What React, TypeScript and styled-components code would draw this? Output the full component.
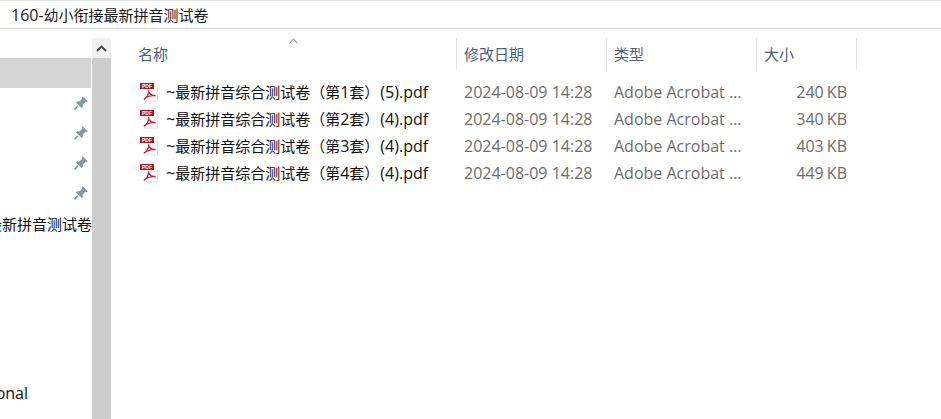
import * as React from 'react';
import styled, { createGlobalStyle } from 'styled-components';

const GlobalStyle = createGlobalStyle`
  html, body {
    margin: 0;
    padding: 0;
    background: #fff;
    overflow: hidden;
  }
  body {
    font-family: "Noto Sans CJK SC", "Open Sans", sans-serif;
  }
`;

// latin bits run a little bigger than the CJK around them
const Latin = styled.span`
  font-family: "Open Sans", sans-serif;
  font-size: 16px;
`;

const Window = styled.div`
  width: 941px;
  height: 419px;
  display: flex;
  flex-direction: column;
  overflow: hidden;
`;

const AddressBar = styled.div`
  height: 27px;
  flex: none;
  padding-left: 11px;
  display: flex;
  align-items: center;
  border-top: 1px solid #e3e3e3;
  border-bottom: 1px solid #d9d9d9;
  font-size: 15px;
  color: #1a1a1a;
  white-space: pre;
`;

const Body = styled.div`
  flex: 1;
  display: flex;
  min-height: 0;
`;

const Sidebar = styled.nav`
  width: 92px;
  flex: none;
  padding-top: 29px;
`;

const NavRow = styled.div<{ $selected?: boolean; $gap?: number; $inset?: number }>`
  height: 30px;
  margin-top: ${(p) => p.$gap || 0}px;
  margin-right: ${(p) => (p.$selected ? 1 : 0)}px;
  padding-right: ${(p) => p.$inset || 0}px;
  display: flex;
  align-items: center;
  justify-content: flex-end;
  overflow: hidden;
  white-space: nowrap;
  font-size: 15px;
  color: #111;
  background: ${(p) => (p.$selected ? '#d4d4d4' : 'transparent')};
`;

const PinWrap = styled.span`
  display: flex;
  margin-right: 3px;
`;

const Scrollbar = styled.div`
  width: 19px;
  flex: none;
  margin-top: 9px;
  display: flex;
  flex-direction: column;
  background: #cdcdcd;
`;

const ScrollButton = styled.div`
  height: 20px;
  background: #f0f0f0;
  display: flex;
  align-items: center;
  justify-content: center;
`;

const List = styled.section`
  flex: 1;
  padding-left: 20px;
  padding-top: 9px;
  position: relative;
`;

const SortArrow = styled.svg`
  position: absolute;
  left: 178px;
  top: 9px;
`;

const HeaderRow = styled.div`
  display: flex;
  height: 32px;
`;

const HeaderCell = styled.div<{ $w: number }>`
  width: ${(p) => p.$w}px;
  flex: none;
  box-sizing: border-box;
  padding-left: 7px;
  padding-bottom: 2px;
  display: flex;
  align-items: center;
  border-right: 1px solid #e5e5e5;
  font-size: 15px;
  color: #4c607a;
`;

const Rows = styled.div`
  padding-top: 8px;
`;

const FileRow = styled.div`
  display: flex;
  height: 27px;
  align-items: center;
  font-size: 15px;
`;

const NameCell = styled.div`
  width: 326px;
  flex: none;
  box-sizing: border-box;
  padding-left: 8px;
  display: flex;
  align-items: center;
  gap: 7px;
  color: #111;
  white-space: pre;
`;

const CopySuffix = styled(Latin)`
  margin-left: 1px;
`;

const DetailCell = styled(Latin)<{ $w: number }>`
  width: ${(p) => p.$w}px;
  flex: none;
  box-sizing: border-box;
  padding-left: 7px;
  color: #6d6d6d;
  white-space: nowrap;
`;

const SizeCell = styled(Latin)`
  width: 90px;
  flex: none;
  text-align: right;
  word-spacing: -1px;
  color: #6d6d6d;
  white-space: nowrap;
`;

const PinIcon = () => (
  <svg width="16" height="16" viewBox="0 0 16 16">
    <path d="M9.6 1.2 14.8 6.2 13.6 7.2 12.4 6.9 9.8 9.5 9.8 12 8.6 13 3 7.4 4.1 6.3 6.6 6.3 9.2 3.7 8.8 2.2Z" fill="#8a96a3" />
    <path d="M5 10.8 1.6 14.4" stroke="#8a96a3" strokeWidth="1.6" fill="none" />
  </svg>
);

const PdfIcon = () => (
  <svg width="20" height="20" viewBox="0 0 20 20">
    <path d="M3.5 7H18.5V19H3.5Z" fill="#fff" />
    <path d="M15.5 2.5 18.5 5.5V19H5" fill="none" stroke="#dcdcdc" strokeWidth="0.8" />
    <rect x="1" y="1" width="14" height="6" fill="#a8182c" />
    <text x="8" y="6" textAnchor="middle" fontSize="5" fontWeight="700" fontFamily="'Liberation Sans', sans-serif" fill="#fff">PDF</text>
    <path
      d="M5 17.4C7.8 15.6 9.4 12.4 10 8.4M9.4 8.4C9.8 11.4 11.8 13.6 16.6 13.8M5 17C8 14.6 12 13.4 16.4 13.4"
      fill="none"
      stroke="#c6223a"
      strokeWidth="1.2"
    />
  </svg>
);

const files = [
  { set: '1', copy: '(5)', size: '240 KB' },
  { set: '2', copy: '(4)', size: '340 KB' },
  { set: '3', copy: '(4)', size: '403 KB' },
  { set: '4', copy: '(4)', size: '449 KB' },
];

const App = () => {
  return (
    <Window>
      <GlobalStyle />
      <AddressBar>
        <Latin>160-</Latin>幼小衔接最新拼音测试卷
      </AddressBar>
      <Body>
        <Sidebar>
          <NavRow $selected />
          {[0, 1, 2, 3].map((i) => (
            <NavRow key={i}>
              <PinWrap>
                <PinIcon />
              </PinWrap>
            </NavRow>
          ))}
          <NavRow>最新拼音测试卷</NavRow>
          <NavRow $gap={140} $inset={64}>
            <Latin>Personal</Latin>
          </NavRow>
        </Sidebar>
        <Scrollbar>
          <ScrollButton>
            <svg width="11" height="7" viewBox="0 0 11 7">
              <path d="M1 6 5.5 1.5 10 6" fill="none" stroke="#444" strokeWidth="1.8" />
            </svg>
          </ScrollButton>
        </Scrollbar>
        <List>
          <SortArrow width="9" height="6" viewBox="0 0 9 6">
            <path d="M.5 5.5 4.5 .8 8.5 5.5" fill="none" stroke="#8a8a8a" strokeWidth="1" />
          </SortArrow>
          <HeaderRow>
            <HeaderCell $w={326}>名称</HeaderCell>
            <HeaderCell $w={150}>修改日期</HeaderCell>
            <HeaderCell $w={150}>类型</HeaderCell>
            <HeaderCell $w={100}>大小</HeaderCell>
          </HeaderRow>
          <Rows>
            {files.map((f) => (
              <FileRow key={f.set}>
                <NameCell>
                  <PdfIcon />
                  <span>
                    <Latin>~</Latin>最新拼音综合测试卷（第<Latin>{f.set}</Latin>套）<CopySuffix>{f.copy}.pdf</CopySuffix>
                  </span>
                </NameCell>
                <DetailCell $w={150}>2024-08-09 14:28</DetailCell>
                <DetailCell $w={150}>Adobe Acrobat ...</DetailCell>
                <SizeCell>{f.size}</SizeCell>
              </FileRow>
            ))}
          </Rows>
        </List>
      </Body>
    </Window>
  );
};

export default App;
